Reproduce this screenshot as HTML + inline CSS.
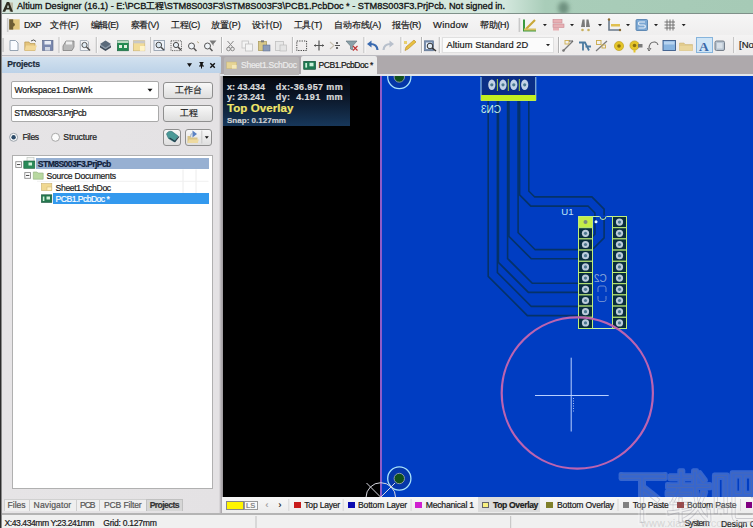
<!DOCTYPE html>
<html><head><meta charset="utf-8">
<style>
*{margin:0;padding:0;box-sizing:border-box}
html,body{width:753px;height:528px;overflow:hidden;background:#f0f0f0;font-family:"Liberation Sans",sans-serif;font-size:8px;color:#1a1a1a}
.a{position:absolute}
.t{position:absolute;white-space:pre;line-height:1;-webkit-text-stroke:0.2px currentColor}
.b{font-weight:bold}
svg{position:absolute;left:0;top:0;overflow:visible}
#title{left:0;top:0;width:753px;height:13px;background:linear-gradient(to right,#d6e8df 0,#d3e7dd 505px,#a9cdb9 545px,#a6cab6 100%)}
#titleline{left:0;top:13px;width:753px;height:1px;background:#7f918a}
#menu{left:0;top:14px;width:753px;height:21px;background:linear-gradient(#f6f6f6,#efeeee)}
#tool{left:0;top:35px;width:753px;height:21px;background:linear-gradient(#f4f3f3,#eceaea);border-bottom:1px solid #bcbcc2}
#proj{left:0;top:56px;width:223px;height:457px;background:linear-gradient(to right,#e6e4e6 0,#e4e2e4 219px,#b4b0b4 221px,#9c989c 223px)}
#projh{left:2px;top:56.5px;width:219px;height:16px;background:linear-gradient(#d2e1ef,#bcd2e8)}
#frame{left:0;top:0;width:2px;height:528px;background:linear-gradient(to right,#2c2c2c 0,#2c2c2c 1px,#8a8a8a 1px,#8a8a8a 2px)}
#tabs{left:221px;top:56px;width:532px;height:18px;background:#aea9ac}
#tabline{left:220px;top:74px;width:533px;height:2px;background:#e2e6ea}
#canvas{left:223px;top:76px;width:530px;height:421px;background:#000}
#board{left:382px;top:76px;width:371px;height:421px;background:#003dc2}
#purple{left:380px;top:76px;width:2px;height:421px;background:#8e5cc6}
#layers{left:222px;top:497px;width:531px;height:16px;background:linear-gradient(#f7f7f7,#ececec)}
#status{left:0;top:513px;width:753px;height:15px;background:#f0f0f0;border-top:2px solid #b4b4b4}
.box{position:absolute;background:#fff;border:1px solid #a9a9a9;border-radius:2px}
.btn{position:absolute;background:linear-gradient(#f8f8f8,#dedede);border:1px solid #8f8f8f;border-radius:3px}
.sep{position:absolute;width:1px;height:15px;background:#b8b8b8;border-right:1px solid #fff}
</style></head><body>
<div id="title" class="a"></div>
<div id="titleline" class="a"></div>
<div id="menu" class="a"></div>
<div id="tool" class="a"></div>
<div id="proj" class="a"></div>
<div id="projh" class="a"></div>
<div id="tabs" class="a"></div>
<div id="tabline" class="a"></div>
<div id="canvas" class="a"></div>
<div id="board" class="a"></div>
<div id="purple" class="a"></div>
<div id="layers" class="a"></div>
<div id="status" class="a"></div>
<div id="frame" class="a"></div>


<!-- title text -->
<span class="t" style="left: 17px; top: 2.2px; font-size: 9.2px; color: rgb(17, 17, 17); -webkit-text-stroke: 0.3px rgb(17, 17, 17); letter-spacing: -0.013px;">Altium Designer (16.1) - E:\PCB工程\STM8S003F3\STM8S003F3\PCB1.PcbDoc * - STM8S003F3.PrjPcb. Not signed in.</span>

<!-- menu text -->
<span class="t" style="left: 24px; top: 21px; font-size: 9px; letter-spacing: -0.505px;">DXP</span>
<span class="t" style="left: 50px; top: 21.3px; font-size: 9px; letter-spacing: -0.16px;">文件(F)</span>
<span class="t" style="left: 90.5px; top: 21.3px; font-size: 9px; letter-spacing: -0.42px;">编辑(E)</span>
<span class="t" style="left: 130.5px; top: 21.3px; font-size: 9px; letter-spacing: -0.34px;">察看(V)</span>
<span class="t" style="left: 171px; top: 21.3px; font-size: 9px; letter-spacing: -0.3px;">工程(C)</span>
<span class="t" style="left: 211px; top: 21.3px; font-size: 9px; letter-spacing: -0.08px;">放置(P)</span>
<span class="t" style="left: 252px; top: 21.3px; font-size: 9px; letter-spacing: -0.1px;">设计(D)</span>
<span class="t" style="left: 293.5px; top: 21.3px; font-size: 9px; letter-spacing: -0.2px;">工具(T)</span>
<span class="t" style="left: 334px; top: 21.3px; font-size: 9px; letter-spacing: -0.143px;">自动布线(A)</span>
<span class="t" style="left: 392px; top: 21.3px; font-size: 9px; letter-spacing: -0.3px;">报告(R)</span>
<span class="t" style="left: 433px; top: 20px; font-size: 9.5px; letter-spacing: 0.201px;">Window</span>
<span class="t" style="left: 480px; top: 21.3px; font-size: 9px; letter-spacing: -0.3px;">帮助(H)</span>

<!-- combo in toolbar -->
<div class="a" style="left:442px;top:37px;width:112px;height:16px;background:#fbfbfb;border:1px solid #e0e0e0"></div>
<span class="t" style="left: 446.4px; top: 40.5px; font-size: 9.3px; letter-spacing: 0.076px;">Altium Standard 2D</span>
<span class="t" style="left:739px;top:40.2px;font-size:9.5px">[No</span>
<div class="a" style="left:696px;top:36.5px;width:17px;height:16.5px;background:#cfe5f6;border:1px solid #86b4dc"></div>

<!-- panel header -->
<span class="t b" style="left: 7.2px; top: 60.2px; font-size: 8.6px; color: rgb(26, 42, 58); letter-spacing: -0.165px;">Projects</span>

<!-- workspace controls -->
<div class="box" style="left:10.5px;top:81.3px;width:148px;height:17.6px"></div>
<span class="t" style="left: 14.5px; top: 86px; font-size: 8.6px; letter-spacing: -0.147px;">Workspace1.DsnWrk</span>
<div class="btn" style="left:163px;top:81.5px;width:49.5px;height:17px"></div>
<div class="box" style="left:10.5px;top:104.6px;width:148px;height:17.4px"></div>
<span class="t" style="left: 14.3px; top: 109px; font-size: 8.6px; letter-spacing: -0.531px;">STM8S003F3.PrjPcb</span>
<div class="btn" style="left:163px;top:104.8px;width:49.5px;height:17px"></div>
<span class="t" style="left:175px;top:85.8px;font-size:9px;color:#222">工作台</span>
<span class="t" style="left:180px;top:109px;font-size:9px;color:#222">工程</span>
<span class="t" style="left: 22.4px; top: 133.3px; font-size: 8.6px; letter-spacing: -0.351px;">Files</span>
<span class="t" style="left: 63.3px; top: 133.3px; font-size: 8.6px; letter-spacing: -0.131px;">Structure</span>
<div class="btn" style="left:163.3px;top:128.6px;width:18px;height:17px"></div>
<div class="btn" style="left:184.8px;top:128.6px;width:27.6px;height:17px"></div>

<!-- tree -->
<div class="a" style="left:11.5px;top:154.9px;width:201px;height:334.5px;background:#fff;border:1px solid #b0b0b0"></div>
<div class="a" style="left:36.3px;top:158.3px;width:172.5px;height:11.2px;background:#97b0d2"></div>
<div class="a" style="left:53.1px;top:193.3px;width:155.7px;height:11.2px;background:#3399ee"></div>
<span class="t b" style="left: 37.8px; top: 160.3px; font-size: 8.6px; color: rgb(16, 32, 58); letter-spacing: -0.567px;">STM8S003F3.PrjPcb</span>
<span class="t" style="left: 46.5px; top: 172px; font-size: 8.6px; letter-spacing: -0.231px;">Source Documents</span>
<span class="t" style="left: 55.6px; top: 183.7px; font-size: 8.6px; letter-spacing: -0.348px;">Sheet1.SchDoc</span>
<span class="t" style="left: 55.6px; top: 195.4px; font-size: 8.6px; color: rgb(255, 255, 255); letter-spacing: -0.536px;">PCB1.PcbDoc *</span>

<!-- bottom panel tabs -->
<div class="a" style="left:3.7px;top:499px;width:179.6px;height:12px;background:#efefef;border:1px solid #d0d0d0;border-bottom:none"></div>
<div class="a" style="left:145.7px;top:499px;width:37.6px;height:12px;background:#d6d6d6;border:1px solid #c0c0c0;border-bottom:none"></div>
<div class="a" style="left:29.2px;top:500px;width:1px;height:11px;background:#cfcfcf"></div><div class="a" style="left:75.5px;top:500px;width:1px;height:11px;background:#cfcfcf"></div><div class="a" style="left:99.3px;top:500px;width:1px;height:11px;background:#cfcfcf"></div>
<span class="t" style="left: 7.6px; top: 501px; font-size: 8.6px; color: rgb(85, 85, 85); letter-spacing: -0.031px;">Files</span>
<span class="t" style="left: 33.6px; top: 501px; font-size: 8.6px; color: rgb(85, 85, 85); letter-spacing: 0.102px;">Navigator</span>
<span class="t" style="left: 80px; top: 501px; font-size: 8.6px; color: rgb(85, 85, 85); letter-spacing: -1.057px;">PCB</span>
<span class="t" style="left: 104px; top: 501px; font-size: 8.6px; color: rgb(85, 85, 85); letter-spacing: -0.166px;">PCB Filter</span>
<span class="t b" style="left: 149.7px; top: 501px; font-size: 8.6px; color: rgb(51, 51, 51); letter-spacing: -0.578px;">Projects</span>

<!-- status -->
<span class="t" style="left: 4.6px; top: 519px; font-size: 8.6px; letter-spacing: -0.467px;">X:43.434mm Y:23.241mm</span>
<span class="t" style="left: 103.3px; top: 519px; font-size: 8.6px; letter-spacing: -0.273px;">Grid: 0.127mm</span>

<!-- doc tabs -->
<div class="a" style="left:224.3px;top:57px;width:74.4px;height:17.5px;background:#bab7b7;border-radius:2px 2px 0 0"></div>
<div class="a" style="left:300.6px;top:56px;width:76.4px;height:19px;background:#ebebeb;border-radius:2px 2px 0 0"></div>
<span class="t" style="left: 241px; top: 61.4px; font-size: 8.5px; color: rgb(236, 236, 236); letter-spacing: -0.252px;">Sheet1.SchDoc</span>
<span class="t" style="left: 318.5px; top: 61.4px; font-size: 8.5px; color: rgb(17, 17, 17); letter-spacing: -0.423px;">PCB1.PcbDoc *</span>

<!--BOARD-->
<svg width="753" height="528" viewBox="0 0 753 528">
<defs><clipPath id="bc"><rect x="223" y="76" width="530" height="421"></rect></clipPath></defs>
<g clip-path="url(#bc)">
<path d="M492.8,90 L492.8,274.5 L529.3,311 L585,311" fill="none" stroke="#053268" stroke-width="10.8" stroke-linejoin="miter"></path>
<path d="M503,90 L503,260.5 L530.3,287.8 L585,287.8" fill="none" stroke="#053268" stroke-width="10.8" stroke-linejoin="miter"></path>
<path d="M513.5,90 L513.5,234.5 L533.2,254.2 L585,254.2" fill="none" stroke="#053268" stroke-width="10.8" stroke-linejoin="miter"></path>
<path d="M524.2,90 L524.2,193 L532.7,201.5 L590,201.5 L599.5,211 L599.5,236 L591.8,243.7 L585,243.7" fill="none" stroke="#053268" stroke-width="10.8" stroke-linejoin="miter"></path>
<path d="M492.8,90 L492.8,274.5 L529.3,311 L585,311" fill="none" stroke="#003dc2" stroke-width="7.6" stroke-linejoin="miter"></path>
<path d="M503,90 L503,260.5 L530.3,287.8 L585,287.8" fill="none" stroke="#003dc2" stroke-width="7.6" stroke-linejoin="miter"></path>
<path d="M513.5,90 L513.5,234.5 L533.2,254.2 L585,254.2" fill="none" stroke="#003dc2" stroke-width="7.6" stroke-linejoin="miter"></path>
<path d="M524.2,90 L524.2,193 L532.7,201.5 L590,201.5 L599.5,211 L599.5,236 L591.8,243.7 L585,243.7" fill="none" stroke="#003dc2" stroke-width="7.6" stroke-linejoin="miter"></path>
<circle cx="399.3" cy="77" r="11.6" fill="#0536a8" stroke="#a8e2fa" stroke-width="1.3"></circle>
<circle cx="399.3" cy="77" r="5.2" fill="#11501a" stroke="#8a9aa8" stroke-width="1"></circle>
<circle cx="399.3" cy="478.5" r="11.6" fill="#0536a8" stroke="#a8e2fa" stroke-width="1.3"></circle>
<circle cx="399.3" cy="478.5" r="5.2" fill="#11501a" stroke="#8a9aa8" stroke-width="1"></circle>
<rect x="481" y="76" width="55" height="19" fill="#0a2e86"></rect>
<path d="M481,77 L481,100.5 L535.8,100.5 L535.8,77" fill="none" stroke="#a8d8f0" stroke-width="1"></path>
<rect x="481" y="95" width="55" height="5.8" fill="#c4f020"></rect>
<ellipse cx="491.8" cy="84.8" rx="3.6" ry="5.2" fill="#c2d2e6"></ellipse>
<circle cx="491.8" cy="84.8" r="1.6" fill="#4a7a90"></circle>
<ellipse cx="503" cy="84.8" rx="3.6" ry="5.2" fill="#c2d2e6"></ellipse>
<circle cx="503" cy="84.8" r="1.6" fill="#4a7a90"></circle>
<ellipse cx="513.8" cy="84.8" rx="3.6" ry="5.2" fill="#c2d2e6"></ellipse>
<circle cx="513.8" cy="84.8" r="1.6" fill="#4a7a90"></circle>
<ellipse cx="524.7" cy="84.8" rx="3.6" ry="5.2" fill="#c2d2e6"></ellipse>
<circle cx="524.7" cy="84.8" r="1.6" fill="#4a7a90"></circle>
<line x1="497.4" y1="79" x2="497.4" y2="91" stroke="#a8d040" stroke-width="1"></line>
<line x1="508.3" y1="79" x2="508.3" y2="91" stroke="#a8d040" stroke-width="1"></line>
<line x1="519.3" y1="79" x2="519.3" y2="91" stroke="#a8d040" stroke-width="1"></line>
<text x="-501" y="112.8" transform="scale(-1,1)" font-family="Liberation Sans" font-size="10" fill="#c8f0e0">CN3</text>
<text x="561.3" y="215" font-family="Liberation Sans" font-size="9.6" fill="#bfe6f6">U1</text>
<rect x="578.5" y="216.5" width="48" height="112" fill="none" stroke="#c8f0a8" stroke-width="1"></rect>
<rect x="599.6" y="215.5" width="6.8" height="1.6" fill="#003dc2"></rect>
<path d="M600,216.5 A3,3 0 0,0 606,216.5" fill="none" stroke="#c8f0a8" stroke-width="1"></path>
<rect x="578.5" y="216.5" width="14" height="11.2" fill="#c4ec48" stroke="#c0ee78" stroke-width="1"></rect>
<circle cx="585.5" cy="222.1" r="2" fill="#7a8a80"></circle>
<rect x="578.5" y="227.7" width="14" height="11.2" fill="#082c3c" stroke="#c0ee78" stroke-width="1"></rect>
<circle cx="585.5" cy="233.3" r="3.6" fill="#bcccdc"></circle>
<circle cx="585.5" cy="233.3" r="1.6" fill="#4c7890"></circle>
<rect x="578.5" y="238.9" width="14" height="11.2" fill="#082c3c" stroke="#c0ee78" stroke-width="1"></rect>
<circle cx="585.5" cy="244.5" r="3.6" fill="#bcccdc"></circle>
<circle cx="585.5" cy="244.5" r="1.6" fill="#4c7890"></circle>
<rect x="578.5" y="250.1" width="14" height="11.2" fill="#082c3c" stroke="#c0ee78" stroke-width="1"></rect>
<circle cx="585.5" cy="255.7" r="3.6" fill="#bcccdc"></circle>
<circle cx="585.5" cy="255.7" r="1.6" fill="#4c7890"></circle>
<rect x="578.5" y="261.3" width="14" height="11.2" fill="#082c3c" stroke="#c0ee78" stroke-width="1"></rect>
<circle cx="585.5" cy="266.9" r="3.6" fill="#bcccdc"></circle>
<circle cx="585.5" cy="266.9" r="1.6" fill="#4c7890"></circle>
<rect x="578.5" y="272.5" width="14" height="11.2" fill="#082c3c" stroke="#c0ee78" stroke-width="1"></rect>
<circle cx="585.5" cy="278.1" r="3.6" fill="#bcccdc"></circle>
<circle cx="585.5" cy="278.1" r="1.6" fill="#4c7890"></circle>
<rect x="578.5" y="283.7" width="14" height="11.2" fill="#082c3c" stroke="#c0ee78" stroke-width="1"></rect>
<circle cx="585.5" cy="289.3" r="3.6" fill="#bcccdc"></circle>
<circle cx="585.5" cy="289.3" r="1.6" fill="#4c7890"></circle>
<rect x="578.5" y="294.9" width="14" height="11.2" fill="#082c3c" stroke="#c0ee78" stroke-width="1"></rect>
<circle cx="585.5" cy="300.5" r="3.6" fill="#bcccdc"></circle>
<circle cx="585.5" cy="300.5" r="1.6" fill="#4c7890"></circle>
<rect x="578.5" y="306.1" width="14" height="11.2" fill="#082c3c" stroke="#c0ee78" stroke-width="1"></rect>
<circle cx="585.5" cy="311.7" r="3.6" fill="#bcccdc"></circle>
<circle cx="585.5" cy="311.7" r="1.6" fill="#4c7890"></circle>
<rect x="578.5" y="317.3" width="14" height="11.2" fill="#082c3c" stroke="#c0ee78" stroke-width="1"></rect>
<circle cx="585.5" cy="322.9" r="3.6" fill="#bcccdc"></circle>
<circle cx="585.5" cy="322.9" r="1.6" fill="#4c7890"></circle>
<rect x="612.5" y="216.5" width="14" height="11.2" fill="#082c3c" stroke="#c0ee78" stroke-width="1"></rect>
<circle cx="619.5" cy="222.1" r="3.6" fill="#bcccdc"></circle>
<circle cx="619.5" cy="222.1" r="1.6" fill="#4c7890"></circle>
<rect x="612.5" y="227.7" width="14" height="11.2" fill="#082c3c" stroke="#c0ee78" stroke-width="1"></rect>
<circle cx="619.5" cy="233.3" r="3.6" fill="#bcccdc"></circle>
<circle cx="619.5" cy="233.3" r="1.6" fill="#4c7890"></circle>
<rect x="612.5" y="238.9" width="14" height="11.2" fill="#082c3c" stroke="#c0ee78" stroke-width="1"></rect>
<circle cx="619.5" cy="244.5" r="3.6" fill="#bcccdc"></circle>
<circle cx="619.5" cy="244.5" r="1.6" fill="#4c7890"></circle>
<rect x="612.5" y="250.1" width="14" height="11.2" fill="#082c3c" stroke="#c0ee78" stroke-width="1"></rect>
<circle cx="619.5" cy="255.7" r="3.6" fill="#bcccdc"></circle>
<circle cx="619.5" cy="255.7" r="1.6" fill="#4c7890"></circle>
<rect x="612.5" y="261.3" width="14" height="11.2" fill="#082c3c" stroke="#c0ee78" stroke-width="1"></rect>
<circle cx="619.5" cy="266.9" r="3.6" fill="#bcccdc"></circle>
<circle cx="619.5" cy="266.9" r="1.6" fill="#4c7890"></circle>
<rect x="612.5" y="272.5" width="14" height="11.2" fill="#082c3c" stroke="#c0ee78" stroke-width="1"></rect>
<circle cx="619.5" cy="278.1" r="3.6" fill="#bcccdc"></circle>
<circle cx="619.5" cy="278.1" r="1.6" fill="#4c7890"></circle>
<rect x="612.5" y="283.7" width="14" height="11.2" fill="#082c3c" stroke="#c0ee78" stroke-width="1"></rect>
<circle cx="619.5" cy="289.3" r="3.6" fill="#bcccdc"></circle>
<circle cx="619.5" cy="289.3" r="1.6" fill="#4c7890"></circle>
<rect x="612.5" y="294.9" width="14" height="11.2" fill="#082c3c" stroke="#c0ee78" stroke-width="1"></rect>
<circle cx="619.5" cy="300.5" r="3.6" fill="#bcccdc"></circle>
<circle cx="619.5" cy="300.5" r="1.6" fill="#4c7890"></circle>
<rect x="612.5" y="306.1" width="14" height="11.2" fill="#082c3c" stroke="#c0ee78" stroke-width="1"></rect>
<circle cx="619.5" cy="311.7" r="3.6" fill="#bcccdc"></circle>
<circle cx="619.5" cy="311.7" r="1.6" fill="#4c7890"></circle>
<rect x="612.5" y="317.3" width="14" height="11.2" fill="#082c3c" stroke="#c0ee78" stroke-width="1"></rect>
<circle cx="619.5" cy="322.9" r="3.6" fill="#bcccdc"></circle>
<circle cx="619.5" cy="322.9" r="1.6" fill="#4c7890"></circle>
<circle cx="596" cy="221.8" r="1.5" fill="#e8f8ff"></circle>
<text x="-606.8" y="282.4" transform="scale(-1,1)" font-family="Liberation Sans" font-size="10" fill="#8aa6d8">C2</text>
<path d="M598,292 L598,288 Q598,286 600,286 L604,286 Q606,286 606,288 L606,292 M598,296 L598,299.5 Q598,301.5 600,301.5 L604,301.5 Q606,301.5 606,299.5 L606,296" fill="none" stroke="#6a8ad0" stroke-width="1"></path>
<circle cx="577.3" cy="393" r="75.6" fill="none" stroke="#bc64b0" stroke-width="2.2"></circle>
<line x1="535" y1="395.5" x2="608.7" y2="395.5" stroke="#b8d0ff" stroke-width="1"></line>
<line x1="571.2" y1="357.7" x2="571.2" y2="431.5" stroke="#b8d0ff" stroke-width="1"></line>
<path d="M573.5,398 V412" stroke="#c8d8ff" stroke-width="1" stroke-dasharray="1,1.5" opacity="0.8"></path>
<circle cx="380.8" cy="497.5" r="14.8" fill="none" stroke="#d8d8e0" stroke-width="1"></circle>
<line x1="366.5" y1="483" x2="395" y2="511.5" stroke="#d8d8e0" stroke-width="1"></line>
<line x1="395" y1="483" x2="366.5" y2="511.5" stroke="#d8d8e0" stroke-width="1"></line>
</g>
</svg>
<!--/BOARD-->
<!-- HUD -->
<div class="a" style="left:222.8px;top:78px;width:126.8px;height:48.4px;background:linear-gradient(#050810 0%,#0a1424 35%,#17375a 100%)"></div>
<span class="t b" style="left:227px;top:83px;font-size:9px;color:#dcdcdc">x: 43.434</span>
<span class="t b" style="left: 275.8px; top: 83px; font-size: 9px; color: rgb(220, 220, 220); letter-spacing: 0.359px;">dx:-36.957 mm</span>
<span class="t b" style="left:227px;top:92.6px;font-size:9px;color:#dcdcdc">y: 23.241</span>
<span class="t b" style="left: 275.8px; top: 92.6px; font-size: 9px; color: rgb(220, 220, 220); letter-spacing: 0.369px;">dy:  4.191  mm</span>
<span class="t b" style="left: 227px; top: 102.8px; font-size: 11.5px; color: rgb(242, 230, 106); letter-spacing: 0.07px;">Top Overlay</span>
<span class="t b" style="left: 227px; top: 116.6px; font-size: 8px; color: rgb(208, 208, 208); letter-spacing: 0.023px;">Snap: 0.127mm</span>

<!-- layer bar -->
<div class="a" style="left:225.5px;top:500.7px;width:18px;height:9.3px;background:#fff500;border:1px solid #888"></div>
<div class="a" style="left:243.5px;top:500.7px;width:14.7px;height:9.3px;background:#fafafa;border:1px solid #999"></div>
<span class="t" style="left:246px;top:501.5px;font-size:7.5px;color:#777">LS</span>
<span class="t" style="left:265.5px;top:500.5px;font-size:8.5px;color:#999">‹</span>
<span class="t" style="left:278.5px;top:500.5px;font-size:8.5px;color:#111">›</span>
<div class="a" style="left:477.6px;top:497px;width:62.6px;height:15px;background:#dcdcdc"></div>
<div class="a" style="left:294.4px;top:501.5px;width:6.5px;height:6.5px;background:#c81c1c"></div>
<span class="t" style="left: 304.3px; top: 501.2px; font-size: 8.6px; letter-spacing: -0.228px;">Top Layer</span>
<div class="a" style="left:348px;top:501.5px;width:6.5px;height:6.5px;background:#0a0ab0"></div>
<span class="t" style="left: 358px; top: 501.2px; font-size: 8.6px; letter-spacing: -0.176px;">Bottom Layer</span>
<div class="a" style="left:415px;top:501.5px;width:6.5px;height:6.5px;background:#d020d0"></div>
<span class="t" style="left: 425.8px; top: 501.2px; font-size: 8.6px; letter-spacing: -0.22px;">Mechanical 1</span>
<div class="a" style="left:482.3px;top:501.5px;width:6.5px;height:6.5px;background:#f8f080;border:1px solid #666"></div>
<span class="t b" style="left: 493px; top: 501.2px; font-size: 8.6px; letter-spacing: -0.368px;">Top Overlay</span>
<div class="a" style="left:546px;top:501.5px;width:6.5px;height:6.5px;background:#80802a"></div>
<span class="t" style="left: 557px; top: 501.2px; font-size: 8.6px; letter-spacing: -0.16px;">Bottom Overlay</span>
<div class="a" style="left:622.6px;top:501.5px;width:6.5px;height:6.5px;background:#808080"></div>
<span class="t" style="left: 632.7px; top: 501.2px; font-size: 8.6px; letter-spacing: -0.269px;">Top Paste</span>
<div class="a" style="left:677.3px;top:501.5px;width:6.5px;height:6.5px;background:#801818"></div>
<span class="t" style="left: 687px; top: 501.2px; font-size: 8.6px; letter-spacing: -0.191px;">Bottom Paste</span>
<div class="a" style="left:745.6px;top:501.5px;width:6.5px;height:6.5px;background:#800080"></div>
<span class="t" style="left: 684.5px; top: 519px; font-size: 8.6px; letter-spacing: -0.693px;">System</span>
<span class="t" style="left:720.9px;top:520px;font-size:8.5px">Design Compiler</span>

<!--ICONS-->
<svg width="753" height="528" viewBox="0 0 753 528">
<rect x="6.8999999999999995" y="18" width="1.6" height="14" fill="#c9c9c9"></rect>
<rect x="9.2" y="19.3" width="10.5" height="10.3" fill="#e2c87e"></rect><rect x="9.2" y="19.3" width="4" height="10.3" fill="#6e5e34"></rect><path d="M13.2,22.5 Q16.5,24.5 13.2,26.8 Z" fill="#5a4a22"></path>
<rect x="518.5999999999999" y="18" width="1.6" height="14" fill="#c9c9c9"></rect>
<path d="M524,19.5 L524,30.5 L536,30.5" fill="none" stroke="#3a9a40" stroke-width="2"></path><path d="M526,29 L535,20" stroke="#c8a838" stroke-width="2.2"></path><rect x="524" y="28.5" width="12" height="2" fill="#d8c060"></rect>
<path d="M542.9,24 L546.9,24 L544.9,26.3 Z" fill="#222"></path>
<rect x="553" y="19.5" width="9" height="3.5" fill="#e8b0b4" stroke="#c88890" stroke-width="0.6"></rect><rect x="553" y="24" width="11" height="3.5" fill="#e8b0b4" stroke="#c88890" stroke-width="0.6"></rect><rect x="553" y="28" width="6" height="2.5" fill="#e8b0b4"></rect>
<path d="M570,24 L574,24 L572,26.3 Z" fill="#222"></path>
<path d="M581,27 L582.5,19.5 L584.5,19.5 L585,27 Z M586,27 L586.5,19.5 L588.5,19.5 L590,27 Z" fill="#7a7a7a"></path><circle cx="582.5" cy="30" r="1.3" fill="#c8b060"></circle><circle cx="588.5" cy="30" r="1.3" fill="#c8b060"></circle>
<path d="M598,24 L602,24 L600,26.3 Z" fill="#222"></path>
<path d="M609,19 L609,30 L620,30" fill="none" stroke="#6a7a8a" stroke-width="1.6"></path><rect x="611" y="24" width="9" height="2.5" fill="#e0c050"></rect><circle cx="609" cy="19.5" r="1.2" fill="#8a6a30"></circle><circle cx="620" cy="30" r="1.2" fill="#8a6a30"></circle>
<path d="M626,24 L630,24 L628,26.3 Z" fill="#222"></path>
<rect x="636" y="19.5" width="11.5" height="11" rx="1" fill="#7ca8d4" stroke="#4a78a8" stroke-width="0.8"></rect><path d="M645,22 L639.5,22 Q638.5,22 638.5,23.5 Q638.5,25 640,25 L644,25 Q645.3,25 645.3,26.5 Q645.3,28 644,28 L638.5,28" fill="none" stroke="#e8f0f8" stroke-width="1.2"></path>
<path d="M654,24 L658,24 L656,26.3 Z" fill="#222"></path>
<path d="M667,19.5 V30.5 M670,19.5 V30.5 M673,19.5 V30.5 M664.5,22 H675 M664.5,25 H675 M664.5,28 H675" stroke="#6a6a6a" stroke-width="0.9"></path>
<path d="M681.7,24 L685.7,24 L683.7,26.3 Z" fill="#222"></path>
<rect x="2.3" y="38" width="1.6" height="14" fill="#c9c9c9"></rect>
<path d="M10,40.5 L15.5,40.5 L18,43 L18,50.5 L10,50.5 Z" fill="#fafcff" stroke="#8a9aaa" stroke-width="0.9"></path>
<path d="M24.8,42 L29,42 L30,43.5 L35,43.5 L35,50.5 L24.8,50.5 Z" fill="#e4c47c" stroke="#b89850" stroke-width="0.7"></path><path d="M26,45.5 L37,45.5 L35,50.5 L24.8,50.5 Z" fill="#f2d898"></path><path d="M31,41 Q34,38.5 36,41.5" fill="none" stroke="#555" stroke-width="1"></path>
<rect x="42.5" y="40.3" width="10.5" height="10.2" fill="#7a88ae" stroke="#5a6888" stroke-width="0.6"></rect><rect x="44.5" y="41" width="6.5" height="3.5" fill="#e8ecf4"></rect><rect x="45" y="47" width="5" height="3.5" fill="#d0d6e2"></rect>
<rect x="58.6" y="37" width="1" height="16" fill="#b4b4b4"></rect><rect x="59.6" y="37" width="1" height="16" fill="#fbfbfb"></rect>
<path d="M63,46 L66,41 L74,41 L74,47 L72,50.5 L63,50.5 Z" fill="#b8b8b8" stroke="#808080" stroke-width="0.8"></path><rect x="66" y="41.5" width="6" height="3" fill="#eee"></rect>
<path d="M80.3,40.5 L87,40.5 L88.5,42 L88.5,50.5 L80.3,50.5 Z" fill="#f4f6f8" stroke="#9aa4b0" stroke-width="0.8"></path><circle cx="84.5" cy="45" r="2.6" fill="#e0ecf4" stroke="#555" stroke-width="1"></circle><path d="M86.5,47 L90,50.5" stroke="#555" stroke-width="1.6"></path>
<rect x="95.8" y="37" width="1" height="16" fill="#b4b4b4"></rect><rect x="96.8" y="37" width="1" height="16" fill="#fbfbfb"></rect>
<path d="M100,45.5 L105.5,42 L111,45.5 L105.5,49 Z" fill="#8898a8"></path><path d="M100,47.5 L105.5,51 L111,47.5 L111,45.5 L105.5,49 L100,45.5 Z" fill="#404e5c"></path><path d="M100,44 L105.5,40.5 L111,44 L105.5,47.5 Z" fill="#5a6a7a"></path>
<rect x="117.3" y="40.8" width="11.2" height="10" fill="#228a50" stroke="#1a6040" stroke-width="0.6"></rect><rect x="117.3" y="40.8" width="11.2" height="2.2" fill="#b8d8c0"></rect><rect x="119" y="45" width="3" height="3" fill="#e0f0e0"></rect><rect x="124" y="45" width="3" height="3" fill="#e0f0e0"></rect>
<rect x="133.3" y="40.8" width="11.5" height="10" fill="#f2dc98" stroke="#c8b070" stroke-width="0.6"></rect><rect x="133.3" y="40.8" width="11.5" height="2.5" fill="#c8c8c8"></rect><rect x="140" y="46" width="4.8" height="4.8" fill="#fff4c8"></rect>
<rect x="150.3" y="37" width="1" height="16" fill="#b4b4b4"></rect><rect x="151.3" y="37" width="1" height="16" fill="#fbfbfb"></rect>
<rect x="154" y="40.5" width="10.5" height="10" fill="#eef2f8" stroke="#8a98a8" stroke-width="0.8"></rect><circle cx="158.8" cy="45" r="2.8" fill="#d8e6f0" stroke="#4a4a4a" stroke-width="1"></circle><path d="M161,47.2 L164,50" stroke="#4a4a4a" stroke-width="1.5"></path>
<rect x="171" y="40.8" width="10.5" height="9.8" fill="none" stroke="#555" stroke-width="0.9" stroke-dasharray="1.2,1"></rect><circle cx="176" cy="45" r="2.6" fill="#e6eef4" stroke="#4a4a4a" stroke-width="1"></circle><path d="M178,47 L181,50" stroke="#4a4a4a" stroke-width="1.5"></path>
<circle cx="191.5" cy="46" r="3" fill="#f0f4f8" stroke="#555" stroke-width="1"></circle><path d="M193.8,48.3 L196.5,51" stroke="#555" stroke-width="1.5"></path><path d="M197,41.5 L199,43" stroke="#b0a070" stroke-width="0.8"></path>
<circle cx="207.5" cy="46" r="3" fill="#f0f4f8" stroke="#555" stroke-width="1"></circle><path d="M209.8,48.3 L212.5,51" stroke="#555" stroke-width="1.5"></path><path d="M209.5,40.5 L216.5,40.5 L213.5,44 L213.5,46 Z" fill="#7a7a7a"></path>
<rect x="221.0" y="37" width="1" height="16" fill="#b4b4b4"></rect><rect x="222.0" y="37" width="1" height="16" fill="#fbfbfb"></rect>
<path d="M227.5,41 L233.5,48 M233.5,41 L227.5,48" stroke="#8a8a8a" stroke-width="1"></path><circle cx="228.5" cy="49" r="1.8" fill="none" stroke="#8a8a8a" stroke-width="1"></circle><circle cx="232.5" cy="49" r="1.8" fill="none" stroke="#8a8a8a" stroke-width="1"></circle>
<rect x="242" y="41" width="6.5" height="7" fill="#f4f4f4" stroke="#c0c0c0" stroke-width="0.8"></rect><rect x="245.5" y="44" width="7" height="7" fill="#f4f4f4" stroke="#c0c0c0" stroke-width="0.8"></rect>
<rect x="258.5" y="41.5" width="8" height="9" fill="#d8c888" stroke="#a89858" stroke-width="0.7"></rect><rect x="261" y="40.3" width="3" height="2" fill="#777"></rect><rect x="263" y="45" width="7" height="6" fill="#8a9ab8" stroke="#5a6a88" stroke-width="0.5"></rect>
<rect x="275.5" y="41.5" width="8" height="9" fill="#e8e8e8" stroke="#c0c0c0" stroke-width="0.8"></rect><rect x="280" y="45" width="6.5" height="6" fill="#e4e4e4" stroke="#bcbcbc" stroke-width="0.7"></rect>
<rect x="291.9" y="37" width="1" height="16" fill="#b4b4b4"></rect><rect x="292.9" y="37" width="1" height="16" fill="#fbfbfb"></rect>
<rect x="296.8" y="41" width="9.8" height="9.5" fill="none" stroke="#444" stroke-width="1" stroke-dasharray="1.3,1.1"></rect>
<path d="M314,45.5 L324,45.5 M319,40.5 L319,50.5" stroke="#555" stroke-width="1.2"></path><path d="M314,45.5 L315.8,44 L315.8,47 Z M324,45.5 L322.2,44 L322.2,47 Z" fill="#555"></path>
<path d="M330,42 L334,45.5 L330,49" fill="none" stroke="#c8c0b0" stroke-width="1.1"></path><circle cx="337" cy="43" r="1.1" fill="#444"></circle><circle cx="337" cy="48" r="1.1" fill="#444"></circle><path d="M335,45.5 L340,45.5" stroke="#555" stroke-width="1"></path>
<path d="M346,41 L357,41 L352.5,46 L352.5,50 L350.5,49 L350.5,46 Z" fill="#8aa0a8" stroke="#607078" stroke-width="0.6"></path><path d="M353,46 L357.5,50.5 M357.5,46 L353,50.5" stroke="#c03030" stroke-width="1.1"></path>
<rect x="363.5" y="37" width="1" height="16" fill="#b4b4b4"></rect><rect x="364.5" y="37" width="1" height="16" fill="#fbfbfb"></rect>
<path d="M377.5,50 Q377,44 370.5,44" fill="none" stroke="#3a6ab0" stroke-width="2.2"></path><path d="M367,44 L371.5,40.5 L371.5,47.5 Z" fill="#3a6ab0"></path>
<path d="M383.5,50 Q384,44 390.5,44" fill="none" stroke="#b8c0cc" stroke-width="2.2"></path><path d="M394,44 L389.5,40.5 L389.5,47.5 Z" fill="#b8c0cc"></path>
<rect x="400.5" y="37" width="1" height="16" fill="#b4b4b4"></rect><rect x="401.5" y="37" width="1" height="16" fill="#fbfbfb"></rect>
<path d="M405,50.5 L406,47 L414,40 L416,42 L408,49 Z" fill="#e8c040" stroke="#b88820" stroke-width="0.6"></path><rect x="404" y="41" width="3" height="3" fill="#e8d070"></rect>
<rect x="421.0" y="37" width="1" height="16" fill="#b4b4b4"></rect><rect x="422.0" y="37" width="1" height="16" fill="#fbfbfb"></rect>
<rect x="424.5" y="40.8" width="9" height="10" fill="#7a90b0" stroke="#506888" stroke-width="0.6"></rect><rect x="426" y="42.5" width="6" height="6.5" fill="#e8eef6"></rect><circle cx="430" cy="46" r="2.8" fill="#dfeaf4" stroke="#333" stroke-width="1"></circle><path d="M432.2,48.2 L436,51" stroke="#333" stroke-width="1.5"></path>
<rect x="438.8" y="37" width="1" height="16" fill="#b4b4b4"></rect><rect x="439.8" y="37" width="1" height="16" fill="#fbfbfb"></rect>
<path d="M546,44 L550,44 L548,46.3 Z" fill="#222"></path>
<rect x="558.0" y="37" width="1" height="16" fill="#b4b4b4"></rect><rect x="559.0" y="37" width="1" height="16" fill="#fbfbfb"></rect>
<path d="M563,51 L573,41" stroke="#7a7a7a" stroke-width="1.2"></path><circle cx="563.5" cy="50.5" r="1.3" fill="#777"></circle><rect x="565" y="40.5" width="4" height="3.5" fill="none" stroke="#d0b050" stroke-width="0.9"></rect><path d="M569,41 L573,41" stroke="#555" stroke-width="0.9"></path>
<path d="M579,42.5 L585,42.5 L589,50.5 M583,42.5 L583,50.5 M585.5,46.5 L591,46.5" fill="none" stroke="#4a7aa0" stroke-width="1.8"></path>
<path d="M596,51 L607,41" stroke="#7a7a7a" stroke-width="1.2"></path><rect x="596.5" y="40.5" width="4.5" height="4" fill="none" stroke="#c8a848" stroke-width="0.9"></rect><rect x="602" y="45" width="3.5" height="3" fill="none" stroke="#c8a848" stroke-width="0.9"></rect>
<circle cx="619" cy="46" r="4.6" fill="#e4c428" stroke="#b89818" stroke-width="0.6"></circle><circle cx="619" cy="46" r="1.8" fill="#8a7010"></circle>
<circle cx="634.5" cy="45.5" r="4.6" fill="#e4c428" stroke="#b89818" stroke-width="0.6"></circle><circle cx="634.5" cy="45.5" r="1.8" fill="#8a7010"></circle><rect x="638" y="44" width="4.5" height="3.5" fill="#7a7a7a"></rect><path d="M634.5,50 L634.5,52.5" stroke="#e4c428" stroke-width="2"></path>
<path d="M649,49 Q649,41.5 655,42 Q657.5,42.5 658,45" fill="none" stroke="#666" stroke-width="1.1"></path><path d="M647.5,48 L649,51 L651,48" fill="none" stroke="#666" stroke-width="1"></path>
<rect x="663" y="40.5" width="12.5" height="10" fill="#88b4e0" stroke="#3a5a88" stroke-width="0.9"></rect><rect x="664" y="41.5" width="10.5" height="3" fill="#b8d4f0"></rect>
<path d="M679.5,43 L684,43 L685,44.5 L692.5,44.5 L692.5,50.5 L679.5,50.5 Z" fill="#e2cc8e" stroke="#c8b070" stroke-width="0.5"></path><rect x="679.5" y="46" width="13" height="4.5" fill="#ead69c"></rect>
<text x="699" y="51" font-family="Liberation Serif" font-weight="bold" font-size="13.5" fill="#3a68a8">A</text>
<rect x="715" y="41" width="9.5" height="9.5" rx="1.5" fill="#b8c4d0" stroke="#6a7480" stroke-width="0.9"></rect><rect x="717" y="43" width="5.5" height="5.5" fill="#d8e0e8"></rect>
<rect x="733.3" y="37" width="1" height="16" fill="#b4b4b4"></rect><rect x="734.3" y="37" width="1" height="16" fill="#fbfbfb"></rect>
<rect x="9" y="2.5" width="4" height="9" fill="#b8b098" opacity="0.8"></rect><path d="M2.5,11.8 L6.8,2 L9.2,2 L13,11.8 L10.6,11.8 L9.8,9.5 L6.2,9.5 L5.2,11.8 Z M6.9,7.8 L9.2,7.8 L8,4.8 Z" fill="#2e2e22"></path>
<defs><filter id="bl" x="-50%" y="-50%" width="200%" height="200%"><feGaussianBlur stdDeviation="2.2"></feGaussianBlur></filter><clipPath id="tc"><rect x="0" y="0" width="753" height="13"></rect></clipPath></defs><g clip-path="url(#tc)"><ellipse cx="563.5" cy="8" rx="5.5" ry="6.5" fill="#4a6a5a" opacity="0.6" filter="url(#bl)"></ellipse></g>
<path d="M187,63.3 L192,63.3 L189.5,67 Z" fill="#111"></path>
<path d="M199.5,62 L203.5,62 L203.5,63 L202.8,63 L202.8,65.5 L204,65.5 L204,66.5 L202,66.5 L202,68.5 L201,68.5 L201,66.5 L199,66.5 L199,65.5 L200.2,65.5 L200.2,63 L199.5,63 Z" fill="#111"></path>
<path d="M210.3,63.2 L214.8,67.7 M214.8,63.2 L210.3,67.7" stroke="#111" stroke-width="1.4"></path>
<path d="M147.5,88.8 L152.5,88.8 L150,91.8 Z" fill="#111"></path>
<circle cx="13.6" cy="137.3" r="4" fill="#fdfdfd" stroke="#9aa2aa" stroke-width="1"></circle><circle cx="13.6" cy="137.3" r="2.2" fill="#2c4a68"></circle>
<circle cx="55.5" cy="137.3" r="4" fill="#fbfbfb" stroke="#a8a8a8" stroke-width="1"></circle>
<path d="M166.5,134 Q168,130.5 172,131.5 L178,136 L174.5,142 L168.5,138.5 Z" fill="#4a9a98" stroke="#2a6a70" stroke-width="0.6"></path><path d="M169.5,138 L175,141.5 L179,136.5" fill="none" stroke="#203a48" stroke-width="1.2"></path>
<path d="M187.5,136 L190,136 L191,137.5 L197.5,137.5 L197.5,143 L187.5,143 Z" fill="#d8c488"></path><path d="M189,139.5 L199,139.5 L197.5,143 L187.5,143 Z" fill="#eedaa0"></path><path d="M192.5,130.5 L197,134 L192.5,137.5 Z" fill="#5a82c4"></path><path d="M190.5,137 Q190.5,133 193,133" fill="none" stroke="#9ab0c8" stroke-width="1"></path>
<rect x="201.3" y="130.5" width="1" height="13" fill="#c8c8c8"></rect><path d="M204.8,136.3 L208.8,136.3 L206.8,138.8 Z" fill="#111"></path>
<rect x="15.8" y="161.7" width="5.7" height="5.7" fill="#fff" stroke="#8a8a8a" stroke-width="0.9"></rect><path d="M17,164.55 H20.3" stroke="#333" stroke-width="0.9"></path>
<rect x="24.8" y="172.6" width="5.7" height="5.7" fill="#fff" stroke="#8a8a8a" stroke-width="0.9"></rect><path d="M26,175.45 H29.3" stroke="#333" stroke-width="0.9"></path>
<rect x="27" y="157.5" width="7" height="6" fill="#f4f6f4" stroke="#b8c0b8" stroke-width="0.6"></rect><rect x="23.8" y="161" width="11" height="7.3" fill="#2a8a58" stroke="#1a5a3a" stroke-width="0.6"></rect><rect x="28.5" y="162.5" width="3.5" height="3" fill="#d0f0d8"></rect>
<path d="M33.3,172 L37,172 L38,173 L43.2,173 L43.2,179.2 L33.3,179.2 Z" fill="#b8d8a0" stroke="#90b080" stroke-width="0.6"></path>
<rect x="41.4" y="183.5" width="10.4" height="7.1" fill="#f0d890" stroke="#c8b070" stroke-width="0.6"></rect><rect x="47" y="187" width="4.8" height="3.6" fill="#fff0c0" stroke="#c8b070" stroke-width="0.5"></rect>
<rect x="41.4" y="194.8" width="10.4" height="7.6" fill="#24784e" stroke="#14503a" stroke-width="0.6"></rect><rect x="42.8" y="196.5" width="1.6" height="4.5" fill="#d0f0d8"></rect><rect x="46.5" y="196.5" width="3.5" height="3" fill="#d0f0d8"></rect>
<path d="M183,169.5 V193 M196,169.5 V193" stroke="#ececec" stroke-width="1"></path><path d="M37,181.3 H208.5" stroke="#f0f0f0" stroke-width="1"></path>
<rect x="226.6" y="62" width="10" height="6.6" fill="#e6d494" stroke="#c8b478" stroke-width="0.5"></rect><rect x="232" y="65" width="4.6" height="3.6" fill="#f4e8b8"></rect>
<rect x="303.7" y="61.3" width="11.9" height="8" fill="#1c7850" stroke="#0c4830" stroke-width="0.6"></rect><rect x="305.3" y="63" width="1.8" height="4.6" fill="#c8f0d8"></rect><rect x="309.5" y="62.8" width="4" height="3.5" fill="#c8f0d8"></rect>
<rect x="255.5" y="516" width="1" height="12" fill="#c0c0c0"></rect><rect x="510.2" y="516" width="1" height="12" fill="#c0c0c0"></rect>
<rect x="288.3" y="499" width="1" height="12" fill="#d8d8d8"></rect>
<rect x="342.7" y="499" width="1" height="12" fill="#d8d8d8"></rect>
<rect x="410.6" y="499" width="1" height="12" fill="#d8d8d8"></rect>
<rect x="617.5" y="499" width="1" height="12" fill="#d8d8d8"></rect>
<rect x="672.5" y="499" width="1" height="12" fill="#d8d8d8"></rect>
<rect x="740" y="499" width="1" height="12" fill="#d8d8d8"></rect>
</svg>
<!--/ICONS-->
<!--WM-->
<svg width="753" height="528" viewBox="0 0 753 528" style="position:absolute;left:0;top:0;pointer-events:none">
<g opacity="0.21"><text x="620" y="516" font-family="Liberation Sans" font-size="47" fill="#fff" stroke="#fff" stroke-width="4.5" stroke-linejoin="round" transform="translate(0,-83) scale(1,1.16)" letter-spacing="-1">下载吧</text></g>
<g opacity="0.3"><text x="620" y="516" font-family="Liberation Sans" font-size="47" fill="none" stroke="#707080" stroke-width="0.8" transform="translate(0,-83) scale(1,1.16)" letter-spacing="-1">下载吧</text></g>
</svg>
<span class="t" style="left:641px;top:518px;font-size:11px;color:rgba(150,150,150,0.25)">www.xiazaiba.com</span>
<!--/WM-->

</body></html>
